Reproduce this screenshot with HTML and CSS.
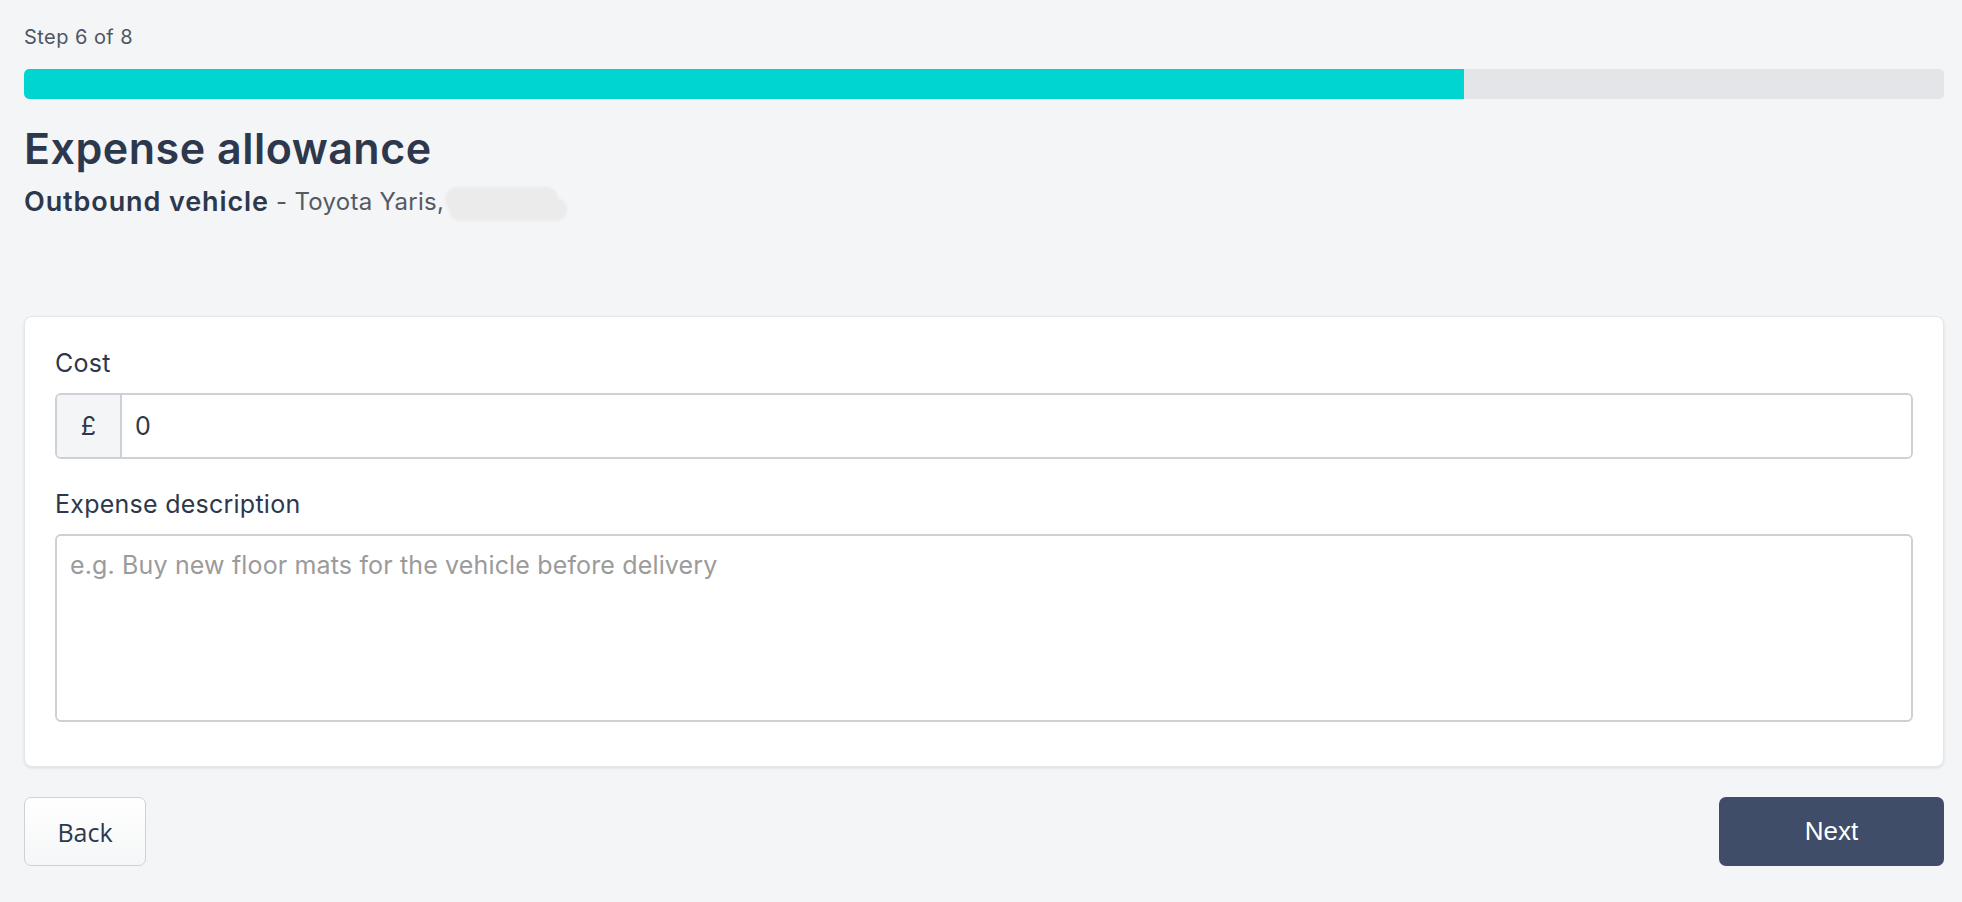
FILE: index.html
```html
<!DOCTYPE html>
<html lang="en">
<head>
<meta charset="utf-8">
<title>Expense allowance</title>
<link rel="stylesheet" href="styles.css">
</head>
<body>
<div class="page">
  <div class="step">Step 6 of 8</div>
  <div class="progress"><div class="progress-fill" style="width:75%"></div></div>
  <h1 class="title">Expense allowance</h1>
  <div class="subtitle"><span class="sub-strong">Outbound vehicle</span><span class="sub-light"> - Toyota Yaris,</span><svg class="redact" width="124" height="36" viewBox="0 0 124 36" aria-hidden="true"><defs><filter id="b" x="-10%" y="-20%" width="120%" height="140%"><feGaussianBlur stdDeviation="1"/></filter></defs><g filter="url(#b)" fill="#ebebeb"><rect x="1" y="1" width="113" height="25" rx="12"/><rect x="5" y="12" width="118" height="23" rx="11"/></g></svg></div>

  <div class="card">
    <label class="label">Cost</label>
    <div class="input-group">
      <span class="prefix">£</span>
      <input class="input" type="text" value="0">
    </div>
    <label class="label label-second">Expense description</label>
    <textarea class="textarea" placeholder="e.g. Buy new floor mats for the vehicle before delivery"></textarea>
  </div>

  <div class="actions">
    <button class="btn btn-back">Back</button>
    <button class="btn btn-next">Next</button>
  </div>
</div>
</body>
</html>
```

FILE: styles.css
```css
* { box-sizing: border-box; }
html, body {
  margin: 0;
  padding: 0;
  background: #f4f5f7;
}
body {
  font-family: Inter, "Noto Sans", sans-serif;
  color: #2f3a4f;
}
.page {
  padding: 24px 18px 0 24px;
}
.step {
  font-size: 20px;
  line-height: 26px;
  letter-spacing: 0.45px;
  color: #4d5562;
}
.progress {
  margin-top: 19px;
  height: 30px;
  background: #e4e5e9;
  border-radius: 5px;
  overflow: hidden;
}
.progress-fill {
  height: 100%;
  background: #00d5d1;
  border-radius: 5px 0 0 5px;
}
.title {
  margin: 24px 0 0;
  font-size: 43px;
  line-height: 50px;
  letter-spacing: 0.5px;
  font-weight: 600;
  color: #2d384c;
}
.subtitle {
  margin-top: 9px;
  line-height: 34px;
  display: flex;
  align-items: center;
}
.sub-strong {
  font-size: 27px;
  font-weight: 600;
  letter-spacing: 0.9px;
  color: #2d384c;
  white-space: pre;
}
.sub-light {
  font-size: 24px;
  letter-spacing: 0.3px;
  color: #545a63;
  white-space: pre;
}
.redact {
  margin-top: 4px;
}
.card {
  margin-top: 94px;
  background: #ffffff;
  border: 1px solid #e6e7ea;
  border-radius: 8px;
  box-shadow: 0 1px 3px rgba(0,0,0,0.1);
  padding: 30px 30px 44px 30px;
  display: flex;
  flex-direction: column;
}
.label {
  font-size: 25px;
  line-height: 32px;
  letter-spacing: 0.25px;
  color: #2d384c;
}
.label-second {
  margin-top: 29px;
}
.input-group {
  margin-top: 14px;
  display: flex;
  height: 66px;
  border: 2px solid #cdd0d5;
  border-radius: 6px;
  overflow: hidden;
}
.prefix {
  width: 65px;
  flex: none;
  display: flex;
  align-items: center;
  justify-content: center;
  background: #f4f5f7;
  border-right: 2px solid #cdd0d5;
  font-size: 25px;
  color: #2d384c;
}
.input {
  flex: 1;
  border: none;
  outline: none;
  font-family: inherit;
  font-size: 25px;
  color: #2d384c;
  padding: 0 13px;
  background: #fff;
}
.textarea {
  margin-top: 14px;
  height: 188px;
  border: 2px solid #cdd0d5;
  border-radius: 6px;
  font-family: inherit;
  font-size: 25px;
  line-height: 32px;
  letter-spacing: 0.15px;
  padding: 13px 13px;
  resize: none;
  outline: none;
  color: #2d384c;
}
.textarea::placeholder {
  color: #9b9b9b;
}
.actions {
  margin-top: 30px;
  display: flex;
  justify-content: space-between;
}
.btn {
  height: 69px;
  border-radius: 7px;
  cursor: pointer;
}
.btn-back {
  width: 122px;
  background: linear-gradient(#ffffff, #f5f6f7);
  border: 1.5px solid #cfd1d5;
  font-family: "Open Sans", sans-serif;
  font-size: 25px;
  color: #2d384c;
}
.btn-next {
  width: 225px;
  background: #3f4d69;
  border: none;
  font-family: "Liberation Sans", Arial, sans-serif;
  font-size: 26px;
  color: #ffffff;
}
```
